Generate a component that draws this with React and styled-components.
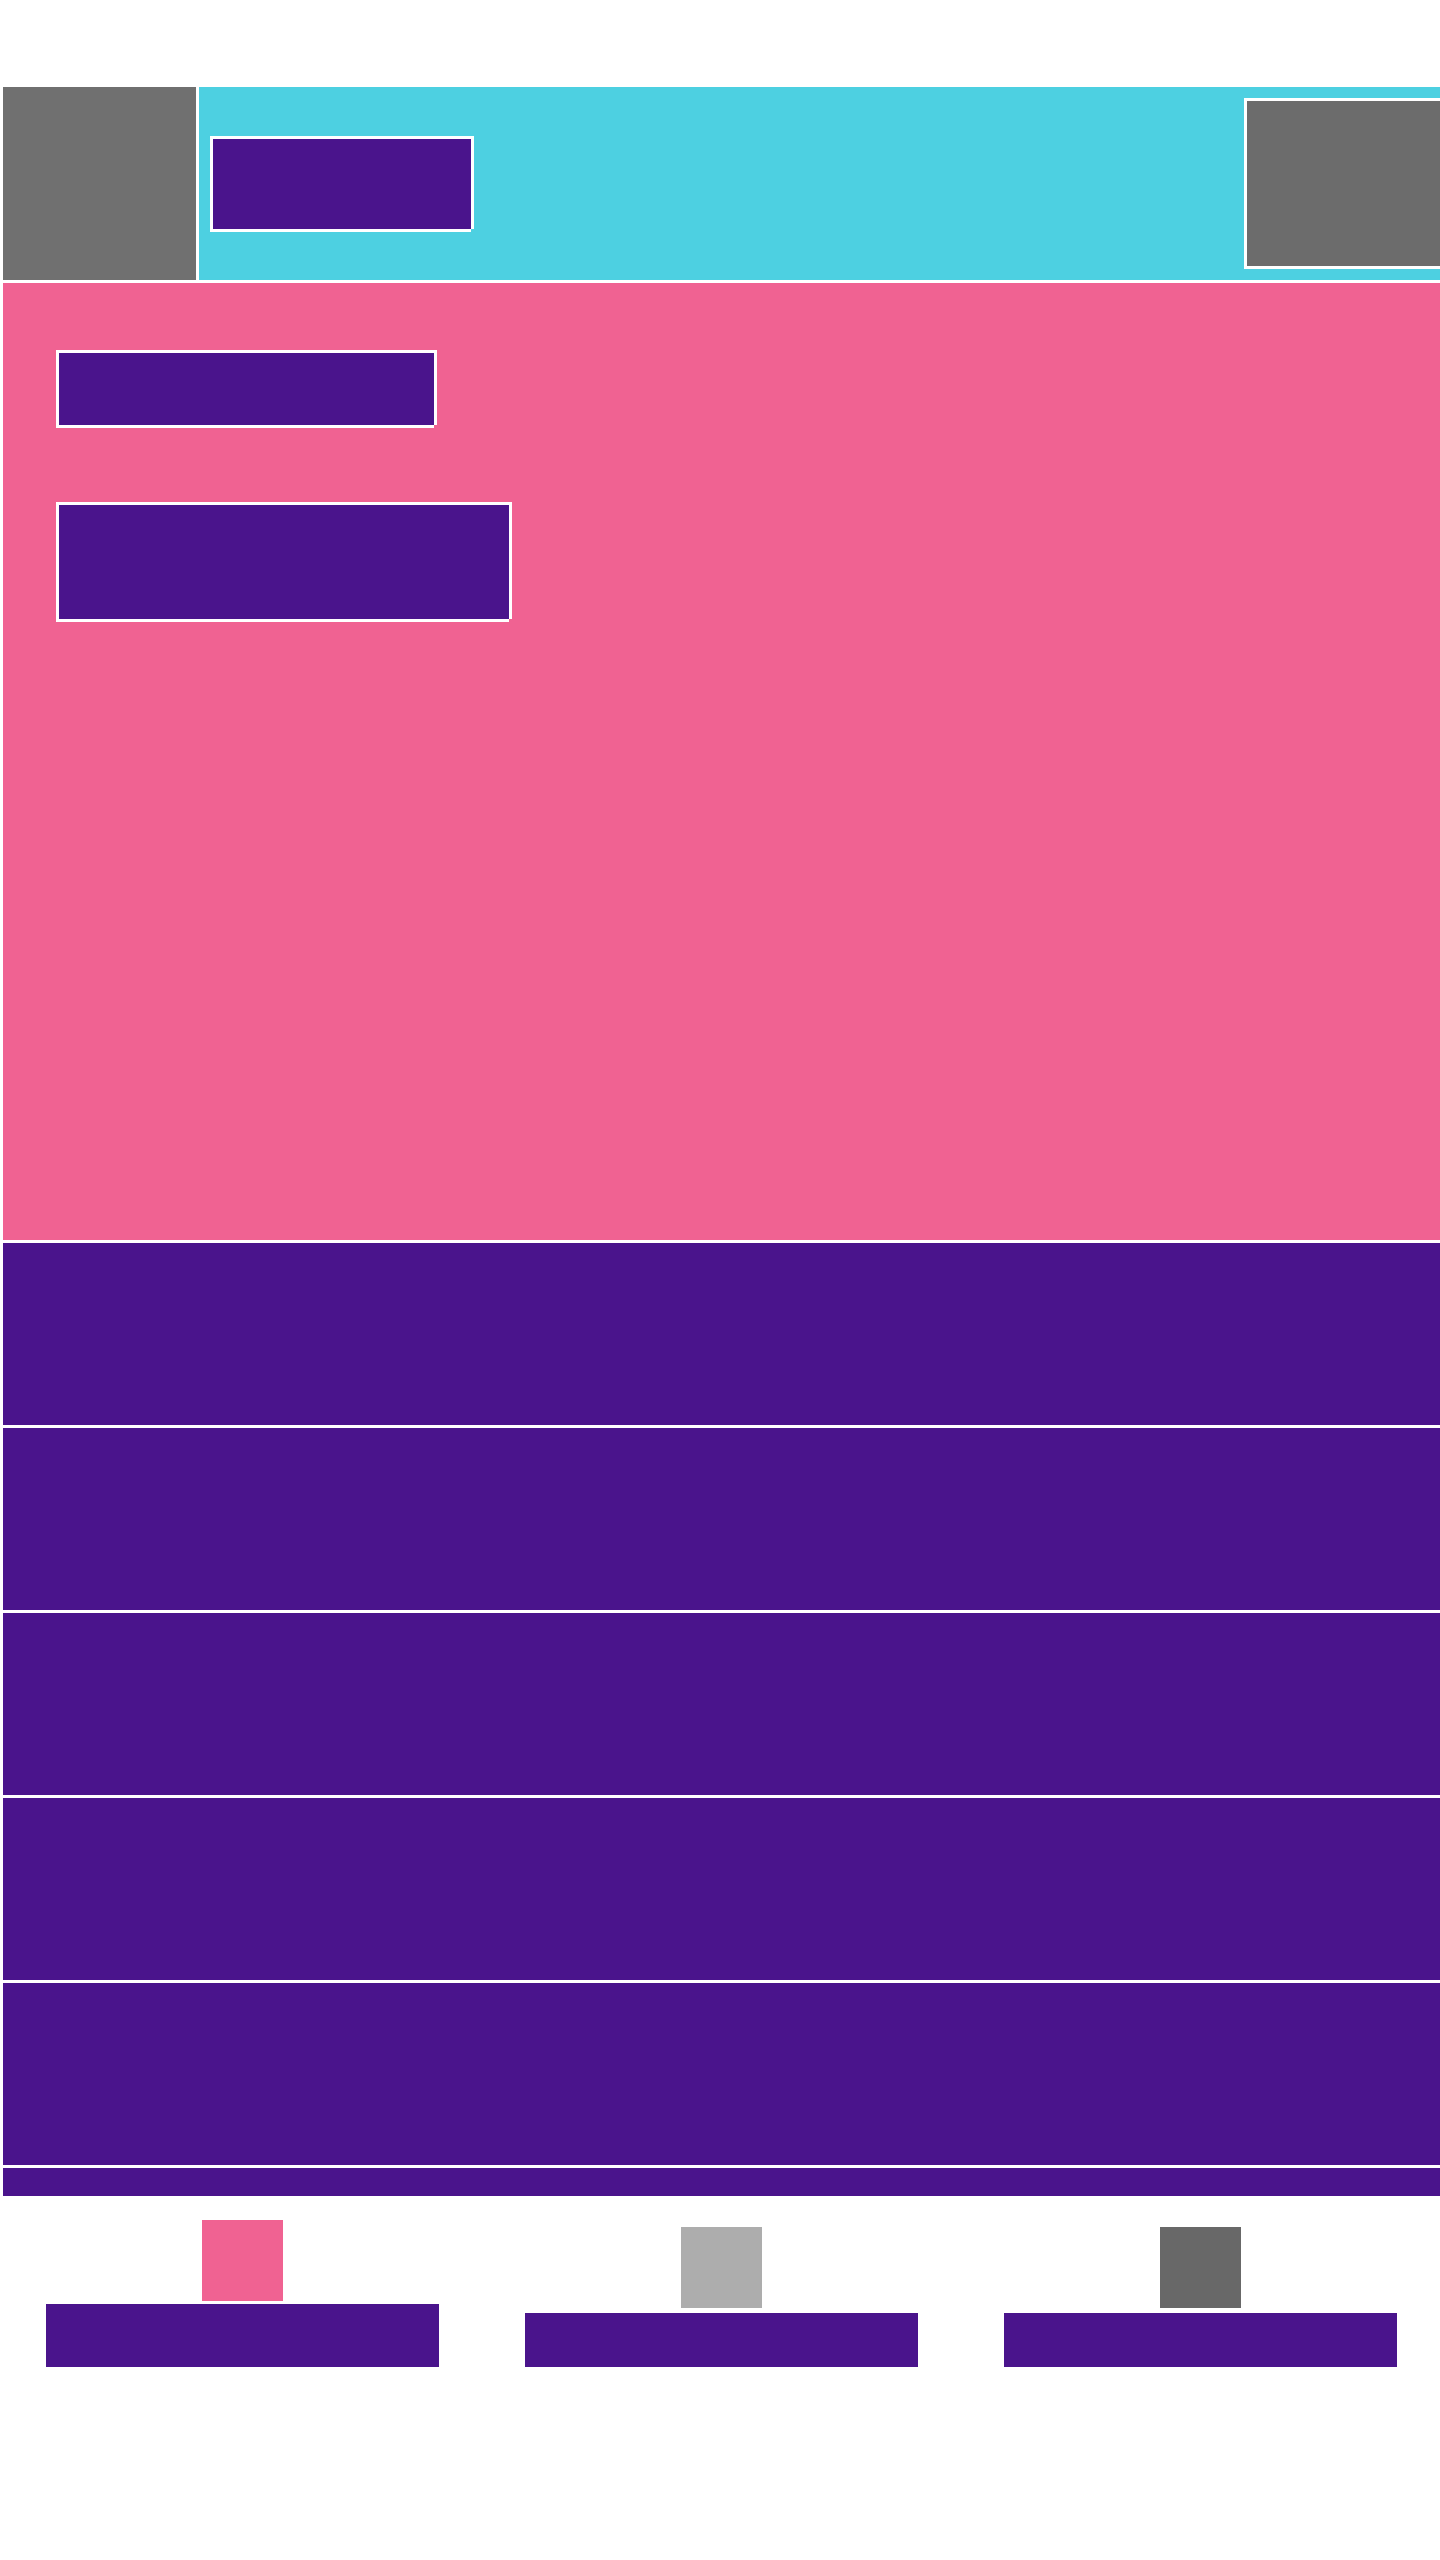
import React from 'react';
import styled, {createGlobalStyle} from 'styled-components';

const PURPLE = '#4a148c'
const PINK = '#f06292'
const CYAN = '#4dd0e1'

// white frame around a block, bottom-right corner left open
const frame = `
  box-shadow: -3px -3px 0 #fff, 3px -3px 0 #fff, -3px 3px 0 #fff, 3px 0 0 #fff, 0 3px 0 #fff;
`

const GlobalStyle = createGlobalStyle`
  html, body {
    margin: 0;
    padding: 0;
    background: #fff;
    font-family: "Liberation Sans", Arial, sans-serif;
  }
  body {
    overflow-x: hidden;
  }
`

const rows = [0, 1, 2, 3, 4, 5]
const tabs = [
  {color: PINK, active: true},
  {color: '#adadad', active: false},
  {color: '#686868', active: false},
]

const App = () => {
  return (
    <Page>
      <GlobalStyle/>
      <Header>
        <Avatar/>
        <TopBar>
          <TitleBlock/>
          <Spacer/>
          <ActionBlock/>
        </TopBar>
      </Header>

      <Hero>
        <HeroLine $w={375} $h={72}/>
        <HeroLine $w={450} $h={114}/>
      </Hero>

      <List>
        {rows.map(i => <Row key={i}/>)}
      </List>

      <TabBar>
        {tabs.map((t, i) => (
          <Tab key={i} $active={t.active}>
            <TabIcon $color={t.color}/>
            <TabLabel $active={t.active}/>
          </Tab>
        ))}
      </TabBar>
    </Page>
  );
};

const Page = styled.div`
  display: flex;
  flex-direction: column;
  gap: 3px;
  padding: 87px 0 0 3px;
  width: 1437px;
  min-height: 2473px;
  overflow: hidden;
`

const Header = styled.header`
  display: flex;
  gap: 3px;
  height: 193px;
`

const Avatar = styled.div`
  width: 193px;
  flex-shrink: 0;
  background: #707070;
`

const TopBar = styled.div`
  flex: 1;
  display: flex;
  align-items: center;
  padding-left: 14px;
  background: ${CYAN};
  overflow: hidden;
`

const TitleBlock = styled.div`
  width: 258px;
  height: 90px;
  margin-top: 1px;
  background: ${PURPLE};
  ${frame}
`

const Spacer = styled.div`
  flex: 1;
`

const ActionBlock = styled.div`
  width: 200px;
  height: 165px;
  margin-right: -7px;
  flex-shrink: 0;
  background: #6c6c6c;
  ${frame}
`

const Hero = styled.section`
  display: flex;
  flex-direction: column;
  align-items: flex-start;
  gap: 80px;
  height: 957px;
  box-sizing: border-box;
  padding: 70px 0 0 56px;
  background: ${PINK};
`

const HeroLine = styled.div`
  width: ${p => p.$w}px;
  height: ${p => p.$h}px;
  background: ${PURPLE};
  ${frame}
`

const List = styled.div`
  display: flex;
  flex-direction: column;
  gap: 3px;
  height: 953px;
  overflow: hidden;
`

const Row = styled.div`
  height: 182px;
  flex-shrink: 0;
  background: ${PURPLE};
`

const TabBar = styled.nav`
  display: grid;
  grid-template-columns: repeat(3, 1fr);
  align-items: end;
  padding-top: 21px;
`

const Tab = styled.div`
  display: flex;
  flex-direction: column;
  align-items: center;
  gap: ${p => p.$active ? 3 : 5}px;
`

const TabIcon = styled.div`
  width: 81px;
  height: 81px;
  background: ${p => p.$color};
`

const TabLabel = styled.div`
  width: 393px;
  height: ${p => p.$active ? 63 : 54}px;
  background: ${PURPLE};
`

export default App;
